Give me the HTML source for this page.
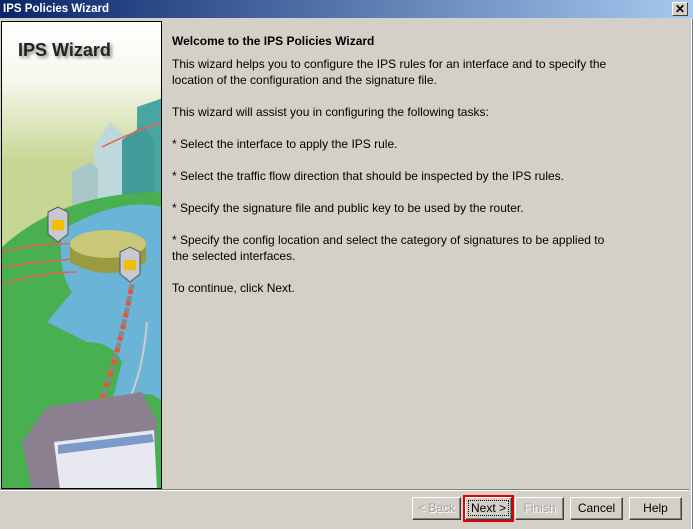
<!DOCTYPE html>
<html><head><style>
*{margin:0;padding:0;box-sizing:border-box}
body{width:693px;height:529px;background:#d4d0c8;font-family:"Liberation Sans",Arial,sans-serif;font-size:12px;position:relative;overflow:hidden;color:#000}
#title{position:absolute;left:0;top:0;width:693px;height:19px;background:linear-gradient(to right,#0a246a,#a6caf0);color:#fff;font-weight:bold;font-size:11.5px;line-height:19px;padding-left:3px;border-bottom:1px solid #d4d0c8}
#close{position:absolute;right:5px;top:2px;width:16px;height:14px;background:#d4d0c8;border:1px solid;border-color:#fff #404040 #404040 #fff;color:#000;font-size:12px;line-height:12px;text-align:center;font-weight:bold}
#panel{position:absolute;left:1px;top:21px;width:161px;height:468px;border:1px solid #000;overflow:hidden}
.t{position:absolute;left:172px;white-space:nowrap}
#sep{position:absolute;left:0;top:489px;width:689px;height:2px;border-top:1px solid #808080;border-bottom:1px solid #fff}
.b{position:absolute;top:497px;height:23px;background:#d4d0c8;border:1px solid;border-color:#fff #404040 #404040 #fff;box-shadow:inset -1px -1px #808080;text-align:center;line-height:21px;font-size:12px}
.d{color:#a0a0a0;text-shadow:1px 1px #fff}
#edge{position:absolute;right:0;top:19px;width:2px;height:510px;background:#808080;border-left:1px solid #fff}
</style></head><body>
<div id="title">IPS Policies Wizard<div id="close">✕</div></div>
<div id="panel">
<svg width="161" height="468" viewBox="0 0 161 468">
<defs><linearGradient id="sky" x1="0" y1="0" x2="0" y2="1"><stop offset="0" stop-color="#ffffff"/><stop offset="0.12" stop-color="#f6f8ee"/><stop offset="0.3" stop-color="#c7d694"/></linearGradient></defs>
<rect width="161" height="468" fill="url(#sky)"/>
<text x="16" y="34" font-family="Liberation Sans" font-weight="bold" font-size="18" fill="#222" style="text-shadow:2px 2px 3px #888">IPS Wizard</text>
<path d="M135 85 L161 76 L161 190 L135 190Z" fill="#4aa5a0"/>
<path d="M92 125 L108 100 L125 115 L125 190 L92 190Z" fill="#bfd8dc"/>
<path d="M120 118 L140 104 L152 118 L152 190 L120 190Z" fill="#3f9c98"/>
<path d="M70 150 L88 140 L96 146 L96 200 L70 200Z" fill="#a8c8c8"/>
<path d="M0 225 Q60 170 161 170 L161 468 L0 468Z" fill="#48b050"/>
<path d="M65 205 Q120 175 161 185 L161 380 Q140 360 120 390 L100 420 L120 340 Q110 320 85 320 L45 300 L70 270 Q55 250 60 205Z" fill="#6ab4d8"/>
<path d="M0 245 Q40 240 70 237 M0 230 Q40 220 75 222 M0 262 Q40 250 75 250 M100 125 Q130 110 161 100" stroke="#e86050" stroke-width="1.5" fill="none"/>
<path d="M68 222 L68 240 Q106 262 144 240 L144 222" fill="#9a9a40"/>
<ellipse cx="106" cy="222" rx="38" ry="14" fill="#c8c878"/>
<path d="M46 190 L56 185 L66 190 L66 212 L56 220 L46 212Z" fill="#c8c8d0" stroke="#555"/>
<rect x="50" y="198" width="12" height="10" fill="#f0c000"/>
<path d="M118 230 L128 225 L138 230 L138 252 L128 260 L118 252Z" fill="#c8c8d0" stroke="#555"/>
<rect x="122" y="238" width="12" height="10" fill="#f0c000"/>
<path d="M130 262 Q118 330 95 390" stroke="#888" stroke-width="5" fill="none" stroke-dasharray="6 6"/>
<path d="M130 262 Q118 330 95 390" stroke="#f05030" stroke-width="5" fill="none" stroke-dasharray="4 8" stroke-dashoffset="6"/>
<path d="M145 300 Q140 360 120 390" stroke="#ccc" stroke-width="2" fill="none"/>
<path d="M20 420 L45 385 L140 370 L155 400 L150 468 L30 468Z" fill="#8a8090"/>
<path d="M52 420 L152 408 L155 468 L58 468Z" fill="#e8e8f0"/>
<path d="M56 423 L150 412 L152 420 L56 432Z" fill="#7a9ac8"/>
</svg>
</div>
<div class="t" style="top:34px;font-weight:bold">Welcome to the IPS Policies Wizard</div>
<div class="t" style="top:57px">This wizard helps you to configure the IPS rules for an interface and to specify the</div>
<div class="t" style="top:73px">location of the configuration and the signature file.</div>
<div class="t" style="top:105px">This wizard will assist you in configuring the following tasks:</div>
<div class="t" style="top:137px">* Select the interface to apply the IPS rule.</div>
<div class="t" style="top:169px">* Select the traffic flow direction that should be inspected by the IPS rules.</div>
<div class="t" style="top:201px">* Specify the signature file and public key to be used by the router.</div>
<div class="t" style="top:233px">* Specify the config location and select the category of signatures to be applied to</div>
<div class="t" style="top:249px">the selected interfaces.</div>
<div class="t" style="top:281px">To continue, click Next.</div>
<div id="sep"></div>
<div id="edge"></div>
<div class="b d" style="left:412px;width:49px">&lt; Back</div>
<div style="position:absolute;left:463px;top:495px;width:51px;height:27px;border:2px solid #e00000"></div>
<div class="b" style="left:465px;top:497px;width:47px"><span style="outline:1px dotted #000;padding:0 2px">Next &gt;</span></div>
<div class="b d" style="left:515px;width:49px">Finish</div>
<div class="b" style="left:570px;width:53px">Cancel</div>
<div class="b" style="left:629px;width:53px">Help</div>
</body></html>
